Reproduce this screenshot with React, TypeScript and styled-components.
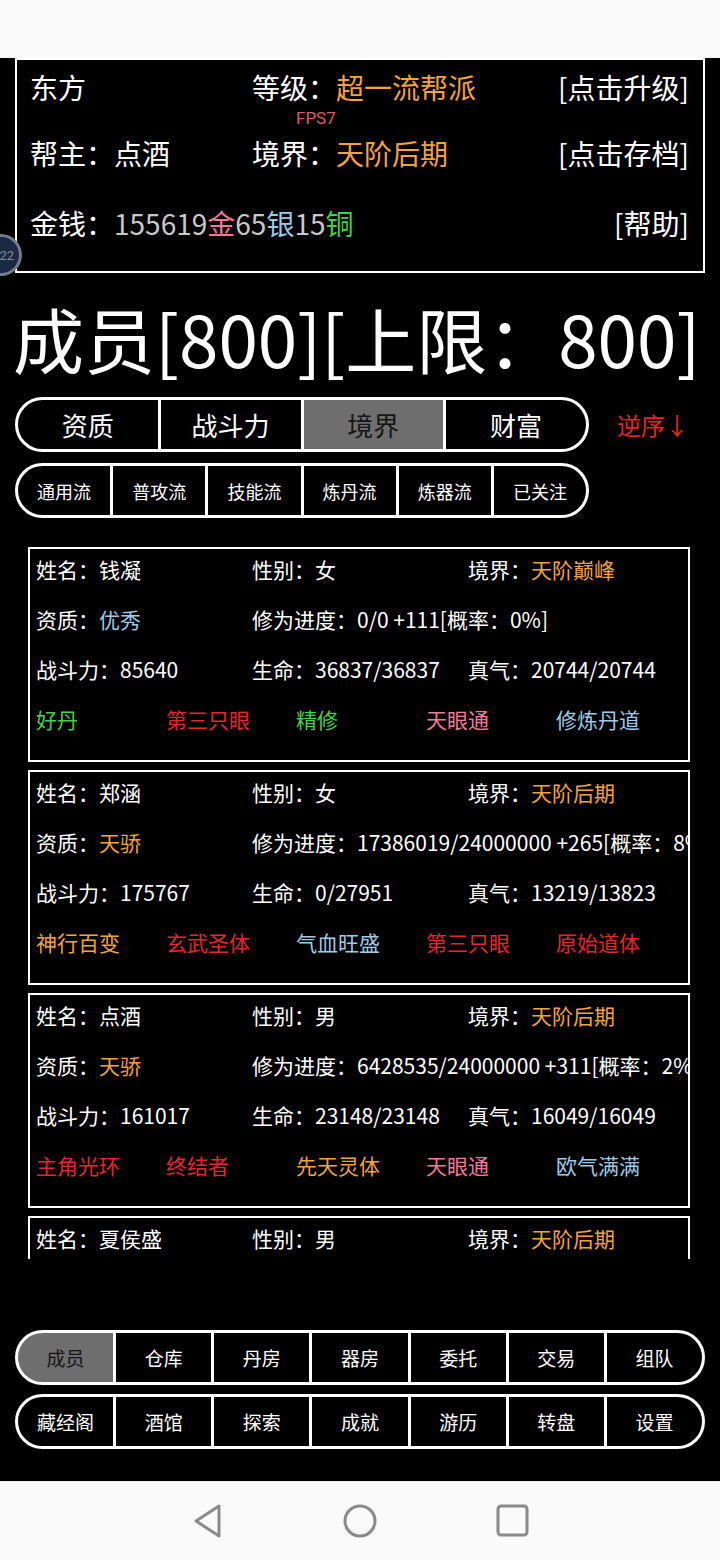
import React from "react";
import styled, { createGlobalStyle } from "styled-components";

type Tone = "white" | "orange" | "red" | "green" | "pink" | "blue" | "grey";

const tones: Record<Tone, string> = {
  white: "#ffffff",
  orange: "#f3a33a",
  red: "#e8242c",
  green: "#3ed44a",
  pink: "#f2789a",
  blue: "#9ccbe8",
  grey: "#c8c8c8",
};

type Member = {
  name: string;
  sex: string;
  realm: string;
  talent: string;
  talentTone: Tone;
  progress: string;
  power: string;
  hp: string;
  qi: string;
  tags: [string, Tone][];
};

const members: Member[] = [
  {
    name: "钱凝",
    sex: "女",
    realm: "天阶巅峰",
    talent: "优秀",
    talentTone: "blue",
    progress: "0/0 +111[概率：0%]",
    power: "85640",
    hp: "36837/36837",
    qi: "20744/20744",
    tags: [
      ["好丹", "green"],
      ["第三只眼", "red"],
      ["精修", "green"],
      ["天眼通", "pink"],
      ["修炼丹道", "blue"],
    ],
  },
  {
    name: "郑涵",
    sex: "女",
    realm: "天阶后期",
    talent: "天骄",
    talentTone: "orange",
    progress: "17386019/24000000 +265[概率：8%]",
    power: "175767",
    hp: "0/27951",
    qi: "13219/13823",
    tags: [
      ["神行百变", "orange"],
      ["玄武圣体", "red"],
      ["气血旺盛", "blue"],
      ["第三只眼", "red"],
      ["原始道体", "red"],
    ],
  },
  {
    name: "点酒",
    sex: "男",
    realm: "天阶后期",
    talent: "天骄",
    talentTone: "orange",
    progress: "6428535/24000000 +311[概率：2%]",
    power: "161017",
    hp: "23148/23148",
    qi: "16049/16049",
    tags: [
      ["主角光环", "red"],
      ["终结者", "red"],
      ["先天灵体", "orange"],
      ["天眼通", "pink"],
      ["欧气满满", "blue"],
    ],
  },
  {
    name: "夏侯盛",
    sex: "男",
    realm: "天阶后期",
    talent: "天骄",
    talentTone: "orange",
    progress: "5120344/24000000 +298[概率：2%]",
    power: "158230",
    hp: "22960/22960",
    qi: "15870/15870",
    tags: [
      ["金刚不坏", "orange"],
      ["第三只眼", "red"],
      ["精修", "green"],
      ["天眼通", "pink"],
      ["欧气满满", "blue"],
    ],
  },
];

const sortTabs = ["资质", "战斗力", "境界", "财富"];
const filterTabs = ["通用流", "普攻流", "技能流", "炼丹流", "炼器流", "已关注"];
const navTop = ["成员", "仓库", "丹房", "器房", "委托", "交易", "组队"];
const navBottom = ["藏经阁", "酒馆", "探索", "成就", "游历", "转盘", "设置"];

const App = () => {
  return (
    <>
      <GlobalStyle />
      <StyledStatusBar />
      <StyledScreen>
        <StyledHeader>
          <StyledHeaderCell>东方</StyledHeaderCell>
          <StyledHeaderCell>
            等级：<StyledTone $tone="orange">超一流帮派</StyledTone>
          </StyledHeaderCell>
          <StyledHeaderCell $right>[点击升级]</StyledHeaderCell>

          <StyledHeaderCell>帮主：点酒</StyledHeaderCell>
          <StyledHeaderCell>
            境界：<StyledTone $tone="orange">天阶后期</StyledTone>
          </StyledHeaderCell>
          <StyledHeaderCell $right>[点击存档]</StyledHeaderCell>

          <StyledHeaderCell $wide>
            金钱：<StyledTone $tone="grey">155619</StyledTone>
            <StyledTone $tone="pink">金</StyledTone>
            <StyledTone $tone="grey">65</StyledTone>
            <StyledTone $tone="blue">银</StyledTone>
            <StyledTone $tone="grey">15</StyledTone>
            <StyledTone $tone="green">铜</StyledTone>
          </StyledHeaderCell>
          <StyledHeaderCell $right>[帮助]</StyledHeaderCell>
        </StyledHeader>

        <StyledTitle>成员[800][上限：800]</StyledTitle>

        <StyledSortRow>
          <StyledPill $width={574}>
            {sortTabs.map((t) => (
              <StyledPillCell key={t} $active={t === "境界"} $size={26}>
                {t}
              </StyledPillCell>
            ))}
          </StyledPill>
          <StyledReverse>逆序↓</StyledReverse>
        </StyledSortRow>

        <StyledFilterRow>
          <StyledPill $width={574}>
            {filterTabs.map((t) => (
              <StyledPillCell key={t} $active={false} $size={18}>
                {t}
              </StyledPillCell>
            ))}
          </StyledPill>
        </StyledFilterRow>

        <StyledList>
          {members.map((m) => (
            <StyledCard key={m.name}>
              <StyledRow>
                <span>姓名：{m.name}</span>
                <span>性别：{m.sex}</span>
                <span>
                  境界：<StyledTone $tone="orange">{m.realm}</StyledTone>
                </span>
              </StyledRow>
              <StyledRow>
                <span>
                  资质：<StyledTone $tone={m.talentTone}>{m.talent}</StyledTone>
                </span>
                <StyledSpan>修为进度：{m.progress}</StyledSpan>
              </StyledRow>
              <StyledRow>
                <span>战斗力：{m.power}</span>
                <span>生命：{m.hp}</span>
                <span>真气：{m.qi}</span>
              </StyledRow>
              <StyledTagRow>
                {m.tags.map(([t, tone], i) => (
                  <StyledTone key={i} $tone={tone}>
                    {t}
                  </StyledTone>
                ))}
              </StyledTagRow>
            </StyledCard>
          ))}
        </StyledList>

        <StyledBottomNav>
          <StyledPill $width={690}>
            {navTop.map((t) => (
              <StyledPillCell key={t} $active={t === "成员"} $size={19}>
                {t}
              </StyledPillCell>
            ))}
          </StyledPill>
          <StyledPill $width={690}>
            {navBottom.map((t) => (
              <StyledPillCell key={t} $active={false} $size={19}>
                {t}
              </StyledPillCell>
            ))}
          </StyledPill>
        </StyledBottomNav>

        <StyledFps>FPS7</StyledFps>
        <StyledFloatBall>22</StyledFloatBall>
      </StyledScreen>

      <StyledNavBar>
        <svg width="32" height="36" viewBox="0 0 32 36">
          <path
            d="M27 3 L4 18 L27 33 Z"
            fill="none"
            stroke="#8a8a8a"
            strokeWidth="3"
            strokeLinejoin="round"
          />
        </svg>
        <svg width="36" height="36" viewBox="0 0 36 36">
          <circle cx="18" cy="18" r="15" fill="none" stroke="#8a8a8a" strokeWidth="3" />
        </svg>
        <svg width="34" height="34" viewBox="0 0 34 34">
          <rect x="2" y="2" width="29" height="29" rx="3" fill="none" stroke="#8a8a8a" strokeWidth="3" />
        </svg>
      </StyledNavBar>
    </>
  );
};

export default App;

const GlobalStyle = createGlobalStyle`
  html, body {
    margin: 0;
    padding: 0;
    background: #fafafa;
  }
  body {
    font-family: "Noto Sans CJK SC", "Noto Sans", sans-serif;
  }
`;

const StyledStatusBar = styled.div`
  height: 58px;
  background: #fafafa;
`;

const StyledScreen = styled.div`
  position: relative;
  height: 1423px;
  background: #000;
  color: #fff;
  display: flex;
  flex-direction: column;
  overflow: hidden;
`;

const StyledHeader = styled.div`
  margin: 0 15px;
  border: 2px solid #fff;
  box-sizing: border-box;
  height: 215px;
  padding: 0 14px 17px 13px;
  display: grid;
  grid-template-columns: 222px 1fr auto;
  grid-template-rows: 54px 78px 62px;
  align-items: center;
  font-size: 28px;
`;

const StyledHeaderCell = styled.div<{ $right?: boolean; $wide?: boolean }>`
  white-space: nowrap;
  text-align: ${(p) => (p.$right ? "right" : "left")};
  grid-column: ${(p) => (p.$wide ? "span 2" : "auto")};
`;

const StyledTone = styled.span<{ $tone: Tone }>`
  color: ${(p) => tones[p.$tone]};
`;

const StyledTitle = styled.div`
  margin-top: 24px;
  padding-left: 13px;
  height: 80px;
  line-height: 80px;
  font-size: 71px;
  white-space: nowrap;
`;

const StyledSortRow = styled.div`
  margin-top: 20px;
  padding: 0 15px;
  display: flex;
  align-items: center;
`;

const StyledFilterRow = styled.div`
  margin-top: 11px;
  padding: 0 15px;
  display: flex;
`;

const StyledPill = styled.div<{ $width: number }>`
  width: ${(p) => p.$width}px;
  height: 55px;
  box-sizing: border-box;
  border: 3px solid #fff;
  border-radius: 28px;
  overflow: hidden;
  background: #fff;
  display: flex;
  gap: 3px;
`;

const StyledPillCell = styled.div<{ $active: boolean; $size: number }>`
  flex: 1;
  display: flex;
  align-items: center;
  justify-content: center;
  font-size: ${(p) => p.$size}px;
  background: ${(p) => (p.$active ? "#6e6e6e" : "#000")};
  color: ${(p) => (p.$active ? "#151515" : "#fff")};
  white-space: nowrap;
`;

const StyledReverse = styled.div`
  margin-left: 28px;
  font-size: 24px;
  color: #e92323;
`;

const StyledList = styled.div`
  margin: 29px 30px 0 28px;
  height: 712px;
  overflow: hidden;
  display: flex;
  flex-direction: column;
  gap: 8px;
`;

const StyledCard = styled.div`
  flex-shrink: 0;
  height: 215px;
  box-sizing: border-box;
  border: 2px solid #fff;
  padding: 0 0 21px 6px;
  display: flex;
  flex-direction: column;
  gap: 10px;
  overflow: hidden;
  font-size: 21px;
`;

const StyledRow = styled.div`
  height: 40px;
  line-height: 40px;
  display: grid;
  grid-template-columns: 216px 216px 1fr;
  white-space: nowrap;
`;

const StyledSpan = styled.span`
  grid-column: span 2;
`;

const StyledTagRow = styled.div`
  height: 40px;
  line-height: 40px;
  display: grid;
  grid-template-columns: repeat(5, 130px);
  white-space: nowrap;
`;

const StyledBottomNav = styled.div`
  margin-top: auto;
  padding: 0 15px 32px;
  display: flex;
  flex-direction: column;
  gap: 9px;
`;

const StyledFps = styled.div`
  position: absolute;
  left: 296px;
  top: 50px;
  font-family: Roboto, "Noto Sans", sans-serif;
  font-size: 17px;
  line-height: 20px;
  color: #e25a6a;
`;

const StyledFloatBall = styled.div`
  position: absolute;
  left: -20px;
  top: 176px;
  width: 42px;
  height: 42px;
  box-sizing: border-box;
  border-radius: 50%;
  border: 3px solid rgba(150, 160, 172, 0.7);
  background: #1b2a42;
  color: #7c8a9c;
  font-family: Roboto, sans-serif;
  font-size: 13px;
  display: flex;
  align-items: center;
  justify-content: flex-end;
  padding-right: 5px;
`;

const StyledNavBar = styled.div`
  height: 79px;
  background: #fafafa;
  border-top: 1px solid #ececec;
  box-sizing: border-box;
  display: flex;
  align-items: center;
  justify-content: center;
  gap: 118px;
  padding-left: 2px;
`;
